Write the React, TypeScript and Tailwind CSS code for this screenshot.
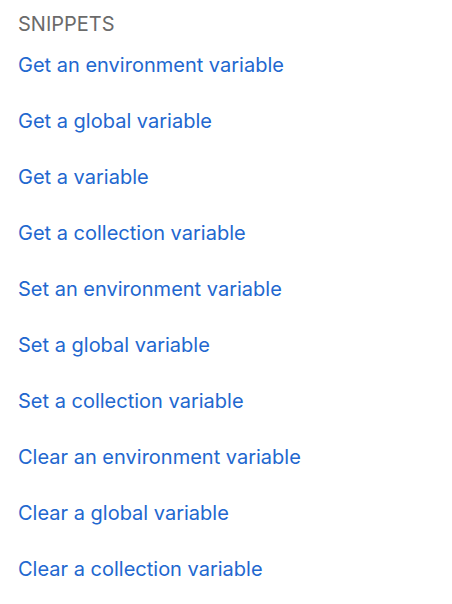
import React from "react";

const items = [
  "Get an environment variable",
  "Get a global variable",
  "Get a variable",
  "Get a collection variable",
  "Set an environment variable",
  "Set a global variable",
  "Set a collection variable",
  "Clear an environment variable",
  "Clear a global variable",
  "Clear a collection variable",
];

export default function App() {
  return (
    <div className="w-[452px] h-[604px] bg-white pl-[18px] pt-[12px] font-['Inter',sans-serif]">
      <div className="text-[20px] leading-[24px] text-[#6b6b6b]">SNIPPETS</div>
      <div className="flex flex-col mt-[17px] gap-[32px]">
        {items.map((t) => (
          <a key={t} className="text-[20px] leading-[24px] text-[#2267cf] cursor-pointer">
            {t}
          </a>
        ))}
      </div>
    </div>
  );
}
